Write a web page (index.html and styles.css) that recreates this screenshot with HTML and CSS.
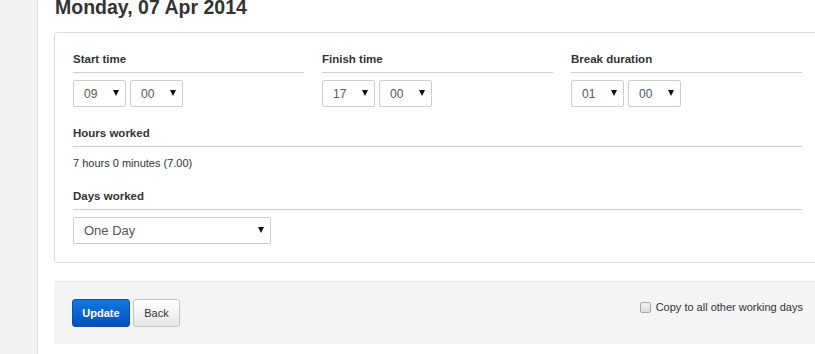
FILE: index.html
```html
<!DOCTYPE html>
<html lang="en">
  <head>
    <meta charset="UTF-8" />
    <meta name="viewport" content="width=device-width, initial-scale=1.0" />
    <title>Edit Timesheet Day</title>
    <link rel="stylesheet" href="styles.css">
  </head>

  <body>
    <div class="sidebar"></div>

    <div class="main">
      <h1 class="day-title">Monday, 07 Apr 2014</h1>

      <!-- Time entry panel -->
      <div class="panel">
        <div class="time-grid">
          <div class="time-group">
            <div class="field-label">Start time</div>
            <div class="select-row">
              <div class="select-wrap small"><select><option>09</option></select></div>
              <div class="select-wrap small"><select><option>00</option></select></div>
            </div>
          </div>
          <div class="time-group">
            <div class="field-label">Finish time</div>
            <div class="select-row">
              <div class="select-wrap small"><select><option>17</option></select></div>
              <div class="select-wrap small"><select><option>00</option></select></div>
            </div>
          </div>
          <div class="time-group">
            <div class="field-label">Break duration</div>
            <div class="select-row">
              <div class="select-wrap small"><select><option>01</option></select></div>
              <div class="select-wrap small"><select><option>00</option></select></div>
            </div>
          </div>
        </div>

        <div class="field-label hours-label">Hours worked</div>
        <p class="hours-value">7 hours 0 minutes (7.00)</p>

        <div class="field-label days-label">Days worked</div>
        <div class="select-wrap wide">
          <select><option>One Day</option><option>Half Day</option></select>
        </div>
      </div>

      <!-- Actions -->
      <div class="form-actions">
        <div class="buttons">
          <button class="btn btn-primary">Update</button>
          <button class="btn btn-default">Back</button>
        </div>
        <label class="copy-check">
          <input type="checkbox" />
          <span>Copy to all other working days</span>
        </label>
      </div>
    </div>
  </body>
</html>
```

FILE: styles.css
```css
* {
  margin: 0;
  padding: 0;
  box-sizing: border-box;
}

body {
  font-family: "Liberation Sans", Arial, sans-serif;
  color: #333;
  background-color: #fff;
  display: flex;
  min-height: 100vh;
  overflow: hidden;
}

.sidebar {
  width: 38px;
  flex-shrink: 0;
  background-color: #f2f2f2;
  border-right: 1px solid #dedede;
}

.main {
  padding-left: 16px;
  flex-shrink: 0;
}

.day-title {
  font-size: 19.5px;
  font-weight: bold;
  line-height: 20px;
  margin: -3px 0 15px;
  padding-left: 1px;
  color: #333;
}

/* Panel */
.panel {
  width: 767px;
  border: 1px solid #dcdcdc;
  border-radius: 4px;
  padding: 18px 18px 18px;
}

.time-grid {
  display: grid;
  grid-template-columns: repeat(3, 231px);
  column-gap: 18px;
}

.field-label {
  font-size: 11.5px;
  font-weight: bold;
  line-height: 16px;
  padding-bottom: 5px;
  border-bottom: 1px solid #cfcfcf;
}

.select-row {
  display: flex;
  gap: 4px;
  margin-top: 7px;
}

.select-wrap {
  position: relative;
}

.select-wrap select {
  appearance: none;
  -webkit-appearance: none;
  display: block;
  width: 100%;
  background: #fff;
  border: 1px solid #ccc;
  border-radius: 2px;
  font-family: "Liberation Sans", Arial, sans-serif;
  color: #555;
  padding-left: 10px;
  outline: none;
}

.select-wrap::after {
  content: "";
  position: absolute;
  top: 10px;
  right: 7px;
  border-left: 3px solid transparent;
  border-right: 3px solid transparent;
  border-top: 6px solid #111;
}

.select-wrap.small {
  width: 53px;
}

.select-wrap.small select {
  height: 27px;
  font-size: 12px;
}

.select-wrap.wide {
  width: 198px;
  margin-top: 7px;
}

.select-wrap.wide select {
  height: 27px;
  font-size: 13px;
}

.hours-label {
  margin-top: 18px;
}

.hours-value {
  font-size: 11px;
  line-height: 16px;
  margin-top: 8px;
}

.days-label {
  margin-top: 17px;
}

/* Footer actions */
.form-actions {
  width: 767px;
  margin-top: 18px;
  background-color: #f4f4f4;
  border-top: 1px solid #e6e6e6;
  padding: 17px 18px 17px 18px;
  display: flex;
  justify-content: space-between;
  align-items: flex-start;
}

.buttons {
  display: flex;
  gap: 3px;
}

.btn {
  height: 28px;
  font-family: "Liberation Sans", Arial, sans-serif;
  font-size: 11px;
  border-radius: 3px;
  cursor: pointer;
}

.btn-primary {
  width: 58px;
  color: #fff;
  font-weight: bold;
  background: linear-gradient(#1478e0, #004fc4);
  border: 1px solid #0a4fb0;
}

.btn-primary:hover {
  background: #0050c0;
}

.btn-default {
  width: 47px;
  color: #333;
  background: linear-gradient(#fff, #e6e6e6);
  border: 1px solid #c4c4c4;
}

.copy-check {
  display: flex;
  align-items: center;
  gap: 5px;
  font-size: 11px;
  margin-top: 2px;
}

.copy-check input {
  appearance: none;
  -webkit-appearance: none;
  width: 11px;
  height: 11px;
  border: 1px solid #a8a8a8;
  border-radius: 2px;
  background: linear-gradient(#f4f4f4, #dcdcdc);
}
```
